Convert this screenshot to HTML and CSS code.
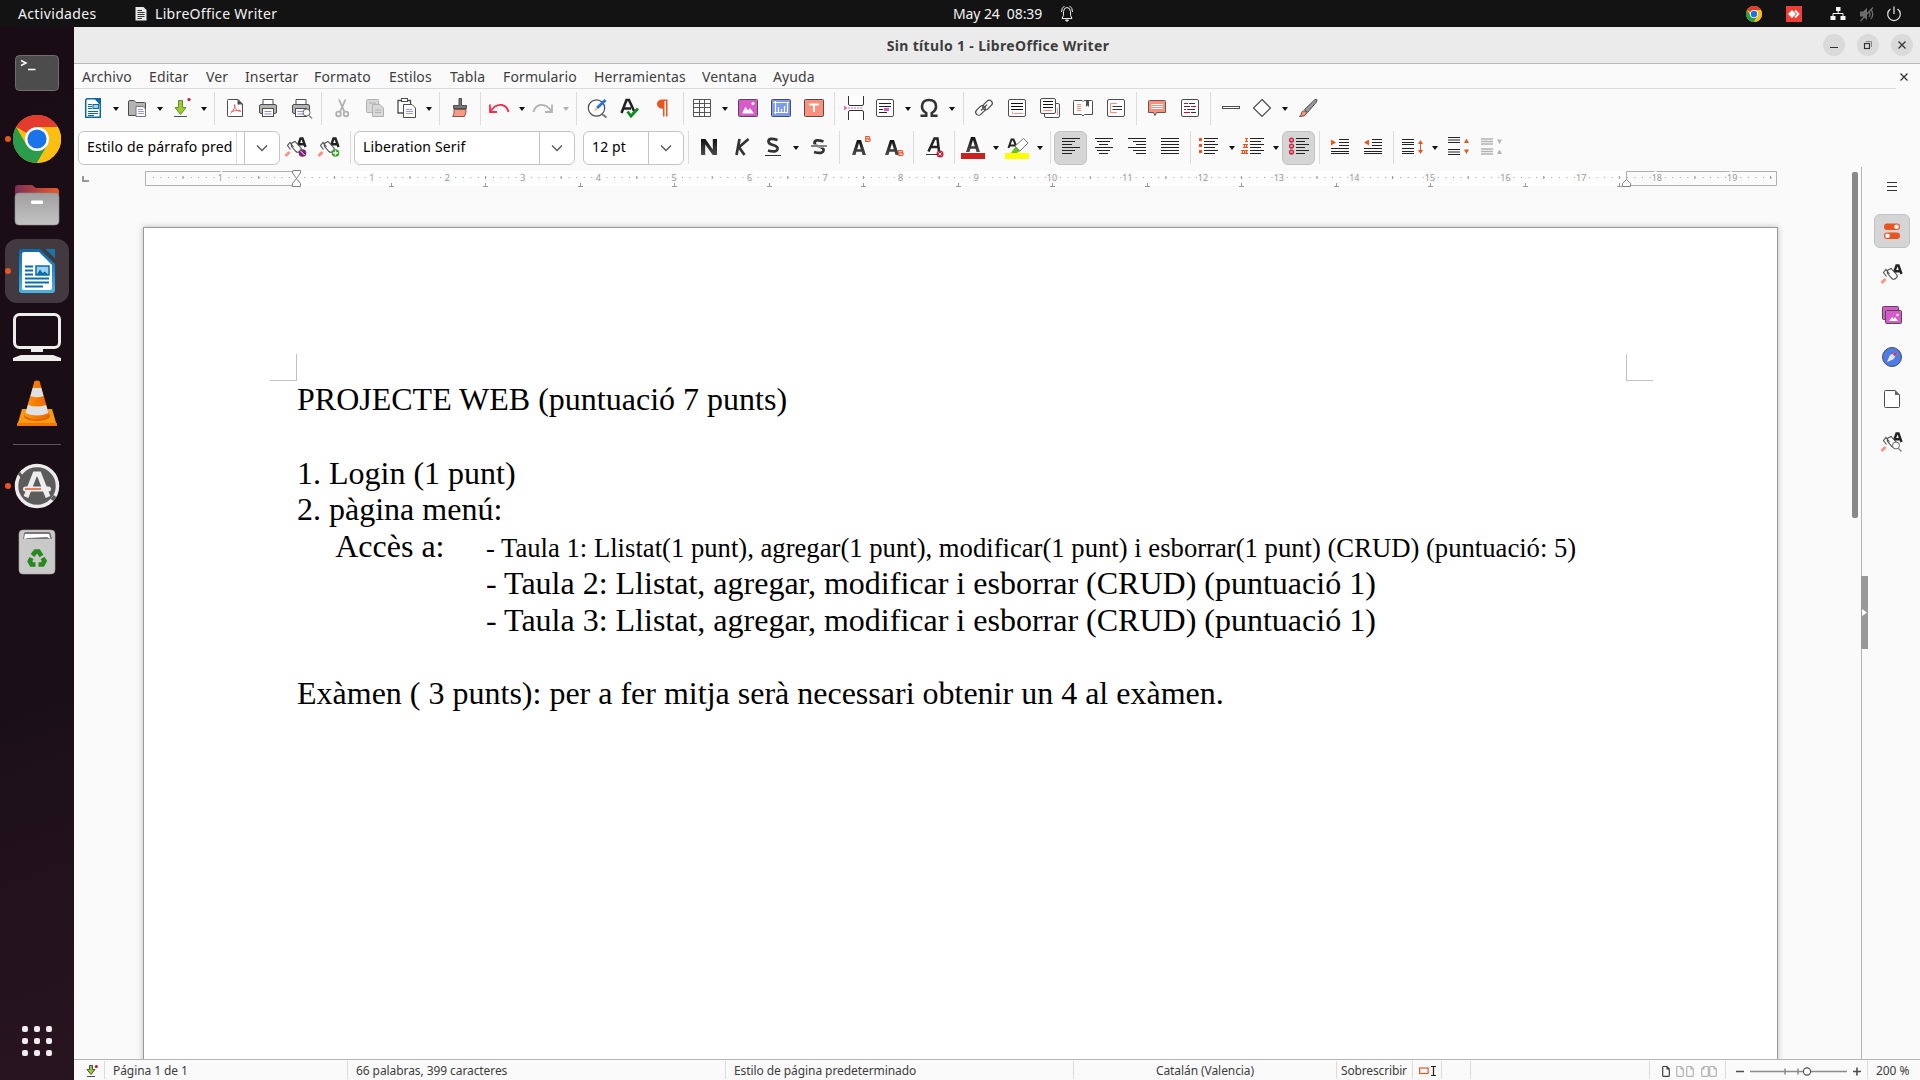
FILE: index.html
```html
<!DOCTYPE html>
<html lang="es">
<head>
<meta charset="utf-8">
<title>Sin título 1 - LibreOffice Writer</title>
<link rel="stylesheet" href="styles.css">
</head>
<body>
<svg class="defs" width="0" height="0" aria-hidden="true">
  <defs>
    <linearGradient id="gFolder" x1="0" x2="1" y1="0" y2="0"><stop offset="0" stop-color="#7c2d58"/><stop offset="1" stop-color="#ee5a24"/></linearGradient>
    <linearGradient id="gGrey" x1="0" x2="0" y1="0" y2="1"><stop offset="0" stop-color="#a09f9f"/><stop offset="1" stop-color="#c4c3c3"/></linearGradient>
    <linearGradient id="gBlue" x1="0" x2="0" y1="0" y2="1"><stop offset="0" stop-color="#0d69a3"/><stop offset=".5" stop-color="#1f8dcb"/><stop offset="1" stop-color="#4fb3e0"/></linearGradient>
    <linearGradient id="gCone" x1="0" x2="1" y1="0" y2="0"><stop offset="0" stop-color="#ff9a1a"/><stop offset=".5" stop-color="#f57900"/><stop offset="1" stop-color="#e86a00"/></linearGradient>
    <linearGradient id="gDark" x1="0" x2="0" y1="0" y2="1"><stop offset="0" stop-color="#111"/><stop offset="1" stop-color="#4d4d4d"/></linearGradient>
    <pattern id="dots" x="222.5" width="7.559" height="10" patternUnits="userSpaceOnUse"><rect y="0" width="1" height="1" fill="#999"/></pattern>

    <symbol id="chrome" viewBox="0 0 48 48">
      <circle cx="24" cy="24" r="24" fill="#fbbf12"/>
      <path d="M24 24 3.2 12A24 24 0 0 1 44.8 12H24z" fill="#e33b2e"/>
      <path d="M3.2 12A24 24 0 0 0 24 48L34.4 30 24 24 13.6 30z" fill="#2a9c4a"/>
      <path d="M24 12H44.8A24 24 0 0 1 24 48L34.4 30z" fill="#fbbf12"/>
      <circle cx="24" cy="24" r="12" fill="#fff"/><circle cx="24" cy="24" r="9.6" fill="#1a73e8"/>
    </symbol>
    <symbol id="new" viewBox="0 0 24 24"><path d="M6 2.7H14.5L19.3 8V21.3H4.7V4z" fill="#fff" stroke="#0a69a3" stroke-width="1.5"/><path d="M13 2H20V10z" fill="#0a69a3"/><path d="M7 8.5h4M7 10.5h4M7 12.5h4M7 15.5h10M7 17.5h10M7 19.5h6" stroke="#0a69a3"/><rect x="12" y="8.5" width="5.5" height="4" fill="#9fd0ee" stroke="#0a69a3"/></symbol>
    <symbol id="open" viewBox="0 0 24 24"><path d="M3.5 19.5V6Q3.500 4.500 5 4.500H9L11 6.500H19.500Q20.500 6.500 20.500 8V19.500z" fill="#b3b3b3" stroke="#4d4d4d"/><path d="M11 10.500H18L20.500 13V20.500H11z" fill="#fff" stroke="#777"/><path d="M13 13.500h5M13 15.500h6M13 17.500h6" stroke="#9a96f0"/></symbol>
    <symbol id="save" viewBox="0 0 24 24"><path d="M9.500 4.500h4v7h3.500L11.500 18.500 6 11.500h3.500z" fill="#99cc33" stroke="#6c8a2a"/><path d="M5 20.500h13" stroke="#4d4d4d"/><circle cx="20" cy="3.500" r="1.600" fill="#c8102e"/></symbol>
    <symbol id="pdf" viewBox="0 0 24 24"><path d="M5.500 3.500H15L19.500 8V20.500H5.500Q4.500 20.500 4.500 19.500V4.500Q4.500 3.500 5.500 3.500z" fill="#fff" stroke="#4d4d4d"/><path d="M14.500 3V8.500H20z" fill="#4d4d4d"/><path d="M11.500 8.500C12 13 14 15 18 15.500M11.500 8.500C12.500 11 10 15 7.500 17.500M8 16Q12 13.500 17.500 14.500" fill="none" stroke="#ed5e68"/></symbol>
    <symbol id="print" viewBox="0 0 24 24"><path d="M7 8.500V3.500H17V8.500" fill="#fff" stroke="#4d4d4d"/><rect x="3.500" y="8.500" width="17" height="9" rx="1.500" fill="#b3b3b3" stroke="#4d4d4d"/><rect x="6.500" y="12.500" width="11" height="8" fill="#fff" stroke="#4d4d4d"/><path d="M8.500 15.500h7M8.500 18h7" stroke="#8e8bea"/></symbol>
    <symbol id="mag" viewBox="0 0 24 24"><circle cx="17.500" cy="16.500" r="3.500" fill="#fafafa" stroke="#666"/><path d="M20 19.500 23 22.500" stroke="#888" stroke-width="1.500"/></symbol>
    <symbol id="cut" viewBox="0 0 24 24"><g fill="none" stroke="#b0b0b0" stroke-width="1.800"><path d="M9 3.500 14.500 16M15.500 3.500 10 16"/><circle cx="8.500" cy="18" r="2.300"/><circle cx="16" cy="18" r="2.300"/></g></symbol>
    <symbol id="copy" viewBox="0 0 24 24"><g fill="#d8d8d8" stroke="#b0b0b0"><rect x="3.500" y="3.500" width="12" height="13" rx="1"/><path d="M9.500 8.500H17L20.500 12V20.500H9.500z"/></g><path d="M6 7h7M12 14h6M12 16.500h6" stroke="#b0b0b0"/></symbol>
    <symbol id="paste" viewBox="0 0 24 24"><path d="M4 4.500H16.500V17H4z" fill="#fff" stroke="#4d4d4d" stroke-width="1.300"/><rect x="7.500" y="2.500" width="6" height="3" fill="#fff" stroke="#4d4d4d"/><path d="M9.500 8.500H18L21.500 12V21.500H9.500z" fill="#fff" stroke="#4d4d4d"/><path d="M12 13.500h6M12 15.500h7M12 17.500h7" stroke="#9a96f0"/></symbol>
    <symbol id="clone" viewBox="0 0 24 24"><path d="M11 2.500h2.500v7h5v3h-13v-3H11z" fill="#777" stroke="#4d4d4d"/><path d="M6 13.500H18V16L16.500 20.500H4.500C6.500 18.500 6 15 6 13.500z" fill="#ff9782" stroke="#7d5a52"/></symbol>
    <symbol id="undo" viewBox="0 0 24 24"><path d="M3.500 15.500Q8 8 15 9Q20 10 21.500 16M3 8.500V16H10" fill="none" stroke="currentColor" stroke-width="1.800"/></symbol>
    <symbol id="find" viewBox="0 0 24 24"><circle cx="11.500" cy="12" r="8.200" fill="#fff" stroke="#4d4d4d" stroke-width="1.200"/><path d="M17 18 21.500 21.500" stroke="#777" stroke-width="2"/><path d="M12 12 20.500 4" stroke="#2a6fe0" stroke-width="3"/><path d="M9.500 15 10.300 11.700 12.700 13.700z" fill="#e8b84a"/></symbol>
    <symbol id="spell" viewBox="0 0 24 24"><path d="M3.500 17 8.500 4H11L16 15M6 12.500H13" fill="none" stroke="#222" stroke-width="2.600"/><path d="M9.500 15.500 13 20 20 12.500" fill="none" stroke="#0c8a1e" stroke-width="2.800"/></symbol>
    <symbol id="pilcrow" viewBox="0 0 24 24"><path d="M14 3.500H11A5 4.600 0 0 0 11 12.700H12V20.500H13.500V5H15V20.500H16.500V3.500z" fill="#e95420"/></symbol>
    <symbol id="table" viewBox="0 0 24 24"><path d="M3.500 3.500H20.500V20.500H3.500zM3.500 7.500H20.500M3.500 11.500H20.500M3.500 16.500H20.500M9.500 3.500V20.500M14.500 3.500V20.500" fill="#fff" stroke="#555"/></symbol>
    <symbol id="image" viewBox="0 0 24 24"><rect x="2.500" y="3.500" width="19" height="17" rx="1" fill="#d85acb" stroke="#4d4d4d"/><path d="M6 17.500 9.500 10.500 12 14.500 14 12 18 17.500z" fill="#fff"/><circle cx="17" cy="7.500" r="1.500" fill="#fff"/></symbol>
    <symbol id="chart" viewBox="0 0 24 24"><rect x="2.500" y="3.500" width="19" height="17" rx="1" fill="#7b9bf5" stroke="#4d4d4d"/><path d="M4 6.500H20M6.500 5V18M5 16.500H19M18.500 6V17M9.500 16V11M12.500 16V13M15.500 16V10" fill="none" stroke="#fff" stroke-width="1.200"/></symbol>
    <symbol id="textbox" viewBox="0 0 24 24"><rect x="2.500" y="3.500" width="19" height="17" rx="1" fill="#ff8f7d" stroke="#4d4d4d"/><path d="M7 8.500H17M12 8.500V16" stroke="#fff" stroke-width="2"/></symbol>
    <symbol id="pbreak" viewBox="0 0 24 24"><path d="M6.500 0V8Q6.500 9.500 8 9.500H20Q21.500 9.500 21.500 8V0M6.500 24V16Q6.500 14.500 8 14.500H20Q21.500 14.500 21.500 16V24" fill="#fff" stroke="#333"/><path d="M6 12H21" stroke="#e06ad0" stroke-dasharray="2 1"/><path d="M2 9.500 5.500 12 2 14.500z" fill="#e06ad0"/></symbol>
    <symbol id="field" viewBox="0 0 24 24"><rect x="3.500" y="3.500" width="17" height="17" rx="1.500" fill="#fff" stroke="#4d4d4d"/><path d="M6 7.500H18M6 10.500H18M6 13.500H10M6 16.500H14" stroke="#222"/><rect x="11" y="12" width="5" height="3" fill="#d85acb"/></symbol>
    <symbol id="omega" viewBox="0 0 24 24"><path d="M3.500 19.700H9.200V17Q5 14.500 5 10.500Q5 4 12 4Q19 4 19 10.500Q19 14.500 14.800 17V19.700H20.500" fill="none" stroke="#333" stroke-width="2.600"/></symbol>
    <symbol id="link" viewBox="0 0 24 24"><g fill="none" stroke="#4d4d4d" stroke-width="1.200"><rect x="3" y="11.500" width="11" height="6" rx="3" transform="rotate(-45 8.500 14.500)"/><rect x="10" y="6" width="11" height="6" rx="3" transform="rotate(-45 15.500 9)"/><path d="M9 14.500 15 8.800"/></g></symbol>
    <symbol id="foot" viewBox="0 0 24 24"><rect x="3.500" y="3.500" width="17" height="17" rx="1.500" fill="#fff" stroke="#4d4d4d"/><path d="M6 7.500H18M6 10.500H18M6 13.500H18" stroke="#111"/><path d="M7.500 15.500V18.500M9 17.500H18" stroke="#ff8f7d"/></symbol>
    <symbol id="end" viewBox="0 0 24 24"><rect x="6.500" y="7.500" width="15" height="14" rx="1.500" fill="#fff" stroke="#4d4d4d"/><rect x="2.500" y="2.500" width="15" height="15" rx="1.500" fill="#fff" stroke="#4d4d4d"/><path d="M5 5.500H15M5 8.500H15M5 11.500H15" stroke="#111"/><path d="M5 14.500H14M19.500 12V19" stroke="#ff8f7d"/></symbol>
    <symbol id="book" viewBox="0 0 24 24"><path d="M3.500 4.500H11L12 5.500 13 4.500H20.500Q21.500 4.500 21.500 5.500V18.500H13.500L12 20 10.500 18.500H2.500V5.500Q2.500 4.500 3.500 4.500z" fill="#fff" stroke="#4d4d4d"/><path d="M6 8.500H10M6 10.500H10M6 12.500H10M6 14.500H10" stroke="#ff8f7d"/><path d="M15 4H18V11L16.500 9.500 15 11z" fill="#4d4d4d"/></symbol>
    <symbol id="xref" viewBox="0 0 24 24"><rect x="3.500" y="3.500" width="17" height="17" rx="1.500" fill="#fff" stroke="#4d4d4d"/><path d="M13 7.500H6.500V16.500H13" fill="none" stroke="#ff8f7d"/><path d="M8.500 10.500H18M8.500 13.500H18" stroke="#333"/></symbol>
    <symbol id="comment" viewBox="0 0 24 24"><path d="M4.500 4.500H19.500Q20.500 4.500 20.500 5.500V16.500H11.500L10 19.500 8.500 16.500H3.500V5.500Q3.500 4.500 4.500 4.500z" fill="#ff8f7d" stroke="#6b5450"/><path d="M6 8.500H18M6 10.500H18M6 12.500H18" stroke="#fff"/></symbol>
    <symbol id="track" viewBox="0 0 24 24"><rect x="3.500" y="3.500" width="17" height="17" rx="1.500" fill="#fff" stroke="#4d4d4d"/><path d="M6 7.500H10M13 10.500H18M6 13.500H8M6 16.500H12" stroke="#c8102e"/><path d="M11 7.500H17M6 10.500H12M9 13.500H17M13 16.500H18" stroke="#333"/></symbol>
    <symbol id="line" viewBox="0 0 24 24"><rect x="3.500" y="10.500" width="17" height="2" fill="#fff" stroke="#4d4d4d"/></symbol>
    <symbol id="shape" viewBox="0 0 24 24"><path d="M12 3.500 20.500 12 12 20.500 3.500 12z" fill="#fff" stroke="#4d4d4d" stroke-width="1.200"/></symbol>
    <symbol id="brush" viewBox="0 0 24 24"><path d="M8.500 13.500 19 3.500Q22 2.500 20.500 6L11.500 16.500z" fill="#999" stroke="#4d4d4d"/><path d="M3.500 20.500Q5.500 19 5.500 16.500Q7 14 9.500 15Q11.500 17 9.500 19Q7.500 20.500 3.500 20.500z" fill="#ff8f7d" stroke="#6b5450"/></symbol>

    <symbol id="style" viewBox="0 0 24 24"><path d="M13.500 12 16.500 3.500H18.500L21.500 12M15 9.300H21" fill="none" stroke="#222" stroke-width="2.400"/><path d="M6.500 14.500 3.500 10.500 6 7.500 9.500 12M8 8 11 6.500 17 13Q18 15 15.500 16.500Q13.500 18 12 16.500L7.500 11.500Q6.500 9.500 8 8z" fill="#fff" stroke="#4d4d4d" stroke-width="1.100"/><path d="M1.500 21 5.500 17" stroke="#ff8f7d" stroke-width="2.800"/></symbol>
    <symbol id="N" viewBox="0 0 24 24"><path d="M4 20V4H8.500L15.800 14.500V4H20V20H15.700L8.200 9.500V20z" fill="url(#gDark)"/></symbol>
    <symbol id="K" viewBox="0 0 24 24"><path d="M6.500 20 9.500 4M18.500 4 9 12.300 14.500 20" fill="none" stroke="#333" stroke-width="2.700"/></symbol>
    <symbol id="S" viewBox="0 0 24 24"><path d="M16.500 5Q7.500 2 7.500 6.500Q7.500 8.800 12 10Q17 11.500 16.500 14Q15.500 18 7 15.500" fill="none" stroke="#333" stroke-width="2.800"/></symbol>
    <symbol id="A" viewBox="0 0 24 24"><path d="M5 19 10 4H14L19 19H15.500L14.600 15.800H9.400L8.500 19zM10.200 13.200H13.800L12 7z" fill="url(#gDark)" fill-rule="evenodd"/></symbol>
    <symbol id="B" viewBox="0 0 6 6"><path d="M.7 .6H3.600Q5 .8 4.600 2Q4.400 2.800 3.600 2.900Q5.300 3 5.200 4.200Q5.100 5.400 3.700 5.400H.7zM.7 2.900H3.800" fill="none" stroke="#e95420" stroke-width="1.100"/></symbol>
    <symbol id="xmark" viewBox="0 0 8 8"><circle cx="4" cy="4" r="3.500" fill="#c8203a"/><path d="M2.500 2.500 5.500 5.500M5.500 2.500 2.500 5.500" stroke="#fff"/></symbol>
    <symbol id="indent" viewBox="0 0 24 24"><path d="M11 4.500H21M11 7.500H21M11 10.500H21M3 13.500H21M3 16.500H21M3 18.500H21" stroke="#222" stroke-width="1.200"/></symbol>
    <symbol id="page" viewBox="0 0 8 12"><path d="M1 1.500H5L7.300 4V10.500Q7.300 11.300 6.500 11.300H1.500Q.7 11.300.7 10.500V1.500" fill="none" stroke="currentColor" stroke-width="1.200"/><path d="M4.500 1V4.500H7.500z" fill="currentColor"/></symbol>
  </defs>
</svg>

<header class="topbar">
  <span class="activities">Actividades</span>
  <span class="app"><svg width="12" height="15" viewBox="0 0 12 15"><path d="M1 1H8.500L11.500 4V14.500H.5V1z" fill="#e8e8e8"/><path d="M2.500 4.500H7M2.500 6.500H9.500M2.500 8.500H9.500M2.500 10.500H9.500M2.500 12.500H7" stroke="#333"/></svg><span>LibreOffice Writer</span></span>
  <span class="clock"><span>May 24&nbsp; 08:39</span><svg width="14" height="17" viewBox="0 0 14 17" fill="none" stroke="#eee"><path d="M2 13.500Q4 11 3.500 6.500Q4 2.500 7 2.500Q10 2.500 10.500 6.500Q10 11 12 13.500zM1.500 7Q1.500 2.500 4.500 1M12.500 7Q12.500 2.500 9.500 1"/><path d="M5.500 15H8.500L7 16.500z" fill="#eee"/></svg></span>
  <span class="tray">
    <svg width="16" height="16"><use href="#chrome"/></svg>
    <svg width="16" height="16" viewBox="0 0 16 16"><path d="M0 0H16V16H0z" fill="#ef3e33"/><path d="M2 8 6 4 10 8 6 12z" fill="#fff"/><path d="M9 4.500 12.500 8 9 11.500" fill="none" stroke="#fff" stroke-width="1.800"/></svg>
    <svg width="16" height="16" viewBox="0 0 16 16"><path d="M6 1H10.500V5H6zM.5 10H5.500V14H.5zM10.500 10H15.500V14H10.500z" fill="#f5f5f5"/><path d="M8.200 5V7.500M3 10V7.500H13V10" fill="none" stroke="#f5f5f5"/></svg>
    <svg width="16" height="16" viewBox="0 0 16 16"><path d="M1 5.500H4L8 2V14L4 10.500H1z" fill="#6d6d6d"/><path d="M10 5.500Q12 8 10 11M12 3.500Q15.500 8 12 13M1.500 15 14 1.500" fill="none" stroke="#6d6d6d" stroke-width="1.300"/></svg>
    <svg width="16" height="16" viewBox="0 0 16 16"><path d="M4.500 3A6.300 6.300 0 1 0 11.500 3M8 .5V8" fill="none" stroke="#e8e8e8" stroke-width="1.200"/></svg>
  </span>
</header>

<div class="desktop">
  <nav class="dock">
    <div class="dock-item"><svg width="46" height="38" viewBox="0 0 46 38"><rect x="1.500" y="1.500" width="43" height="35" rx="4" fill="#4c4c4c" stroke="#6e6e6e"/><path d="M7 6.500 12 9 7 11.500M14 15.500H21.500" fill="none" stroke="#fff" stroke-width="1.500"/></svg></div>
    <div class="dock-item running"><svg width="48" height="48"><use href="#chrome"/></svg></div>
    <div class="dock-item"><svg width="46" height="42" viewBox="0 0 46 42"><path d="M1 20V4Q1 1 4 1H18L22 4H42Q45 4 45 8V20z" fill="url(#gFolder)"/><rect x="1" y="9" width="44" height="32" rx="4" fill="url(#gGrey)" stroke="#8d8d8d" stroke-width=".6"/><rect x="17" y="16.500" width="12" height="3.500" rx="1.200" fill="#fff"/></svg></div>
    <div class="dock-item running active"><svg width="38" height="46" viewBox="0 0 38 46"><path d="M4 1H22L37 16V42Q37 45 34 45H4Q1 45 1 42V4Q1 1 4 1z" fill="url(#gBlue)"/><path d="M6 4H21L34 17V40Q34 42 32 42H6Q4 42 4 40V6Q4 4 6 4z" fill="#fff"/><path d="M23 0 38 15" stroke="#433a40" stroke-width="2"/><path d="M27.500 1H37V10.500z" fill="#1b75ad"/><path d="M7 18.500H15M7 22.500H15M7 26.500H15M7 30.500H31M7 34.500H31M7 38.500H25" stroke="#0a6cab" stroke-width="2"/><rect x="18" y="18" width="13" height="9" fill="#9bd2f0" stroke="#0a6cab" stroke-width="1.500"/><path d="M18.500 27 22 21.500 24.500 25 27 23.500 30.500 27z" fill="#0a6cab"/></svg></div>
    <div class="dock-item"><svg width="48" height="48" viewBox="0 0 48 48"><rect x="1.500" y="1.500" width="45" height="33" rx="5" fill="none" stroke="#eeeeec" stroke-width="3"/><path d="M18 36H30V39H18zM8 42H40L48 45V48H0V45z" fill="#eeeeec"/></svg></div>
    <div class="dock-item"><svg width="42" height="46" viewBox="0 0 42 46"><path d="M6 29H36L41 46H1z" fill="#fb9a12"/><path d="M1 43H41V46H1z" fill="#f0780a"/><ellipse cx="21" cy="36" rx="13" ry="5" fill="#d96300"/><path d="M18.500 1Q21 0 23.500 1L33.500 36Q21 43 8.500 36z" fill="url(#gCone)"/><path d="M16.700 8H25.300L27.500 16Q21 18.500 14.500 16zM12 25Q21 28 30 25L32.500 33Q21 38 9.500 33z" fill="#dfe2e4"/></svg></div>
    <hr class="dock-sep">
    <div class="dock-item running"><svg width="46" height="46" viewBox="0 0 46 46"><circle cx="23" cy="23" r="20.500" fill="#5c5c5c" stroke="#ececec" stroke-width="3.500"/><path d="M5 10 8 14M38 37 41 33" stroke="#5c5c5c" stroke-width="3"/><path d="M12 34 21 11H25L34 34" fill="none" stroke="#eee" stroke-width="5"/><rect x="9" y="23.500" width="28" height="5" rx="2.500" fill="#eee"/><path d="M11 26H27" stroke="#e95420" stroke-width="1.500"/></svg></div>
    <div class="dock-item"><svg width="38" height="46" viewBox="0 0 38 46"><rect x="1" y="1" width="36" height="44" rx="4" fill="#c9c9c9" stroke="#aaa" stroke-width=".6"/><path d="M5 10 6 4Q6.500 3 8 3H30Q32 3 32.500 4L34 10z" fill="#777"/><path d="M6 10 7 5H31L32.500 10 29 8 10 9z" fill="#fff"/><g fill="none" stroke="#26891b" stroke-width="4.600"><path d="M14.500 26.500 17.500 22.500H20.500L23.500 27"/><path d="M24.500 29 26.500 32 24.500 35.500H20.500"/><path d="M17.500 35.500H13.500L11.800 32.500 13.500 29"/></g></svg></div>
    <div class="apps"><i></i><i></i><i></i><i></i><i></i><i></i><i></i><i></i><i></i></div>
  </nav>

  <main class="window">
    <div class="titlebar"><span></span><h1>Sin título 1 - LibreOffice Writer</h1>
      <div class="winbtns">
        <svg width="22" height="22" viewBox="0 0 22 22"><circle cx="11" cy="11" r="11" fill="#dadada"/><path d="M7 13.500H15" stroke="#333"/></svg>
        <svg width="22" height="22" viewBox="0 0 22 22"><circle cx="11" cy="11" r="11" fill="#dadada"/><rect x="7.500" y="9.500" width="5" height="5" fill="none" stroke="#333" stroke-width="1.200"/><path d="M9 7.500H14.500V13" fill="none" stroke="#888"/></svg>
        <svg width="22" height="22" viewBox="0 0 22 22"><circle cx="11" cy="11" r="11" fill="#dadada"/><path d="M7.500 7.500 14.500 14.500M14.500 7.500 7.500 14.500" stroke="#333" stroke-width="1.300"/></svg>
      </div>
    </div>
    <div class="menurow">
      <div class="menubar"><span>Archivo</span><span>Editar</span><span>Ver</span><span>Insertar</span><span>Formato</span><span>Estilos</span><span>Tabla</span><span>Formulario</span><span>Herramientas</span><span>Ventana</span><span>Ayuda</span></div>
      <svg width="10" height="10" viewBox="0 0 10 10"><path d="M1.500 1.500 8.500 8.500M8.500 1.500 1.500 8.500" stroke="#333" stroke-width="1.300"/></svg>
    </div>

    <div class="toolbar standard">
      <div class="grp first"><b class="ic sp"><svg><use href="#new"/></svg></b><b class="ar"></b><b class="ic sp"><svg><use href="#open"/></svg></b><b class="ar"></b><b class="ic sp"><svg><use href="#save"/></svg></b><b class="ar"></b></div>
      <div class="grp"><b class="ic"><svg><use href="#pdf"/></svg></b><b class="ic"><svg><use href="#print"/></svg></b><b class="ic"><svg><use href="#print"/><use href="#mag"/></svg></b></div>
      <div class="grp"><b class="ic"><svg><use href="#cut"/></svg></b><b class="ic"><svg><use href="#copy"/></svg></b><b class="ic sp"><svg><use href="#paste"/></svg></b><b class="ar"></b></div>
      <div class="grp"><b class="ic"><svg><use href="#clone"/></svg></b></div>
      <div class="grp"><b class="ic sp red"><svg><use href="#undo"/></svg></b><b class="ar"></b><b class="ic sp dim flip"><svg><use href="#undo"/></svg></b><b class="ar off"></b></div>
      <div class="grp"><b class="ic"><svg><use href="#find"/></svg></b><b class="ic"><svg><use href="#spell"/></svg></b><b class="ic"><svg><use href="#pilcrow"/></svg></b></div>
      <div class="grp"><b class="ic sp"><svg><use href="#table"/></svg></b><b class="ar"></b><b class="ic"><svg><use href="#image"/></svg></b><b class="ic"><svg><use href="#chart"/></svg></b><b class="ic"><svg><use href="#textbox"/></svg></b></div>
      <div class="grp insert"><b class="ic"><svg><use href="#pbreak"/></svg></b><b class="ic sp"><svg><use href="#field"/></svg></b><b class="ar"></b><b class="ic sp"><svg><use href="#omega"/></svg></b><b class="ar"></b></div>
      <div class="grp"><b class="ic"><svg><use href="#link"/></svg></b><b class="ic"><svg><use href="#foot"/></svg></b><b class="ic"><svg><use href="#end"/></svg></b><b class="ic"><svg><use href="#book"/></svg></b><b class="ic"><svg><use href="#xref"/></svg></b></div>
      <div class="grp"><b class="ic"><svg><use href="#comment"/></svg></b><b class="ic"><svg><use href="#track"/></svg></b></div>
      <div class="grp"><b class="ic"><svg><use href="#line"/></svg></b><b class="ic sp"><svg><use href="#shape"/></svg></b><b class="ar"></b><b class="ic"><svg><use href="#brush"/></svg></b></div>
    </div>

    <div class="toolbar formatting">
      <div class="grp first">
        <div class="combo style-combo"><span>Estilo de párrafo pred</span><i></i><em><svg width="12" height="8" viewBox="0 0 12 8"><path d="M1 1.500 6 6.500 11 1.500" fill="none" stroke="#555" stroke-width="1.300"/></svg></em></div>
        <b class="ic"><svg viewBox="0 0 24 24"><use href="#style"/><circle cx="18.500" cy="18" r="3.800" fill="#7a2a78"/><path d="M16.500 16 20.500 20" stroke="#fff"/></svg></b>
        <b class="ic"><svg viewBox="0 0 24 24"><use href="#style"/><circle cx="18.500" cy="18" r="3.800" fill="#37a02a"/><path d="M16 18H21M18.500 15.500V20.500" stroke="#fff" stroke-width="1.300"/></svg></b>
      </div>
      <div class="grp">
        <div class="combo font-combo"><span>Liberation Serif</span><em><svg width="12" height="8" viewBox="0 0 12 8"><path d="M1 1.500 6 6.500 11 1.500" fill="none" stroke="#555" stroke-width="1.300"/></svg></em></div>
        <div class="combo size-combo"><span>12 pt</span><em><svg width="12" height="8" viewBox="0 0 12 8"><path d="M1 1.500 6 6.500 11 1.500" fill="none" stroke="#555" stroke-width="1.300"/></svg></em></div>
      </div>
      <div class="grp"><b class="ic"><svg><use href="#N"/></svg></b><b class="ic"><svg><use href="#K"/></svg></b><b class="ic sp"><svg viewBox="0 0 24 24"><use href="#S"/><path d="M4 20.500H20" stroke="#333"/></svg></b><b class="ar"></b><b class="ic"><svg viewBox="0 0 24 24"><use href="#S" y="1.500"/><path d="M4 11H20" stroke="#fafafa" stroke-width="3"/><path d="M4 11H20" stroke="#333" stroke-width="1.200"/></svg></b></div>
      <div class="grp"><b class="ic"><svg viewBox="0 0 24 24"><use href="#A" x="-1" y="1"/><use href="#B" x="17" y="1" width="6" height="6"/></svg></b><b class="ic"><svg viewBox="0 0 24 24"><use href="#A" x="-1" y="1"/><use href="#B" x="17" y="15" width="6" height="6"/></svg></b></div>
      <div class="grp"><b class="ic"><svg viewBox="0 0 24 24"><path d="M6.500 16.500 12.500 3.500H15.500L17 16.500M8.500 12H16" fill="none" stroke="#222" stroke-width="2.500"/><path d="M4 19.500H15" stroke="#333"/><use href="#xmark" x="14" y="15" width="8" height="8"/></svg></b></div>
      <div class="grp"><b class="ic sp"><svg viewBox="0 0 24 24"><use href="#A" y="-2"/><path d="M0 18H24V24H0z" fill="#c9211e"/></svg></b><b class="ar"></b><b class="ic sp"><svg viewBox="0 0 24 24"><path d="M3.500 13 6.500 4.500H8.500L12 13M5 10.500H11" fill="none" stroke="#222" stroke-width="2"/><path d="M10 11 18.500 3.500 23 8 15 16z" fill="#fff" stroke="#777"/><path d="M6 18 10.500 11.500 15 16 12 18z" fill="#6abf1f"/><path d="M0 18H24V24H0z" fill="#ff0"/></svg></b><b class="ar"></b></div>
      <div class="grp align"><b class="ic on"><svg viewBox="0 0 24 24"><path d="M3 3.500H21M3 6.500H16M3 9.500H13M3 12.500H21M3 15.500H16M3 18.500H13" stroke="#222"/></svg></b><b class="ic"><svg viewBox="0 0 24 24"><path d="M3 3.500H21M5 6.500H18M7 9.500H16M3 12.500H21M5 15.500H18M7 18.500H16" stroke="#222"/></svg></b><b class="ic"><svg viewBox="0 0 24 24"><path d="M3 3.500H21M8 6.500H21M11 9.500H21M3 12.500H21M8 15.500H21M11 18.500H21" stroke="#222"/></svg></b><b class="ic"><svg viewBox="0 0 24 24"><path d="M3 3.500H21M3 6.500H21M3 9.500H21M3 12.500H21M3 15.500H21M3 18.500H21" stroke="#222"/></svg></b></div>
      <div class="grp lists"><b class="ic sp"><svg viewBox="0 0 24 24"><path d="M7 3.500H21M7 6.500H18M7 9.500H21M7 12.500H18M7 15.500H21M7 18.500H18" stroke="#222"/><path d="M2 3H5V6H2zM2 9H5V12H2zM2 15H5V18H2z" fill="#e95420"/></svg></b><b class="ar"></b><b class="ic sp"><svg viewBox="0 0 24 24"><path d="M9 3.500H23M9 6.500H20M9 9.500H23M9 12.500H20M9 15.500H23M9 18.500H20" stroke="#222"/><path d="M4 3.500H7M5.500 3.500V6.500M4 6.500H7M2 9.500H7M3.500 9.500V12.500M5.500 9.500V12.500M2 12.500H7M0 15.500H7M1.500 15.500V18.500M3.500 15.500V18.500M5.500 15.500V18.500M0 18.500H7" stroke="#e95420" stroke-width="1.200"/></svg></b><b class="ar"></b><b class="ic on"><svg viewBox="0 0 24 24"><path d="M9 3.500H22M9 6.500H18M9 9.500H22M9 12.500H18M9 15.500H22M9 18.500H18" stroke="#222"/><use href="#xmark" x="1.500" y="2" width="6" height="6"/><use href="#xmark" x="1.500" y="8" width="6" height="6"/><use href="#xmark" x="1.500" y="14" width="6" height="6"/></svg></b></div>
      <div class="grp"><b class="ic"><svg viewBox="0 0 24 24"><use href="#indent"/><path d="M3 4.500 8 7.500 3 10.500z" fill="#e95420"/></svg></b><b class="ic"><svg viewBox="0 0 24 24"><use href="#indent"/><path d="M8 4.500 3 7.500 8 10.500z" fill="#e95420"/></svg></b></div>
      <div class="grp last"><b class="ic sp"><svg viewBox="0 0 24 24"><path d="M2 4.500H14M2 7.500H14M2 9.500H14M2 13.500H14M2 16.500H14M2 18.500H14" stroke="#222" stroke-width="1.200"/><path d="M20.500 7V17" stroke="#e95420"/><path d="M18 9 20.500 5 23 9zM18 15 20.500 19 23 15z" fill="#e95420"/></svg></b><b class="ar"></b><b class="ic"><svg viewBox="0 0 24 24"><path d="M2 2.500H14M2 5H14M2 7.500H14M2 14.500H14M2 17H14M2 19.500H14" stroke="#222" stroke-width="1.200"/><path d="M18 8 20.500 3.500 23 8zM18 14.500 20.500 19 23 14.500z" fill="#e95420"/></svg></b><b class="ic"><svg viewBox="0 0 24 24"><path d="M2 4H14M2 6.500H14M2 9H14M2 14H14M2 16.500H14M2 19H14" stroke="#b3b3b3" stroke-width="1.600"/><path d="M18 4.500 20.500 9 23 4.500zM18 19 20.500 14.500 23 19z" fill="#b3b3b3"/></svg></b></div>
    </div>

    <div class="work">
      <section class="editor">
        <svg class="ruler" width="1770" height="24" viewBox="0 0 1770 24">
          <path d="M9 9V14H15" fill="none" stroke="#999" stroke-width="2"/>
          <rect x="222" y="4" width="1331" height="15" fill="#fff"/>
          <rect x="76" y="10" width="1624" height="1" fill="url(#dots)"/>
          <g fill="none" stroke="#999">
            <path d="M71.500 4.500H222.500V18.500H71.500zM1552.500 4.500H1702.500V18.500H1552.500z" stroke="#b0b0b0"/>
            <path d="M109 9V12M184.700 9V12M260.300 9V12M335.900 9V12M411.500 9V12M487.100 9V12M562.700 9V12M638.200 9V12M713.800 9V12M789.400 9V12M865 9V12M940.600 9V12M1016.200 9V12M1091.800 9V12M1167.300 9V12M1242.900 9V12M1318.500 9V12M1394.100 9V12M1469.700 9V12M1545.300 9V12M1620.900 9V12M1696.500 9V12"/>
            <path d="M317.500 16V19.500M315 19.500H320M411.500 16V19.500M409 19.500H414M506.500 16V19.500M504 19.500H509M600.500 16V19.500M598 19.500H603M695.500 16V19.500M693 19.500H698M789.500 16V19.500M787 19.500H792M884.500 16V19.500M882 19.500H887M978.500 16V19.500M976 19.500H981M1073.500 16V19.500M1071 19.500H1076M1167.500 16V19.500M1165 19.500H1170M1262.500 16V19.500M1260 19.500H1265M1356.500 16V19.500M1354 19.500H1359M1451.500 16V19.500M1449 19.500H1454M1545.500 16V19.500M1543 19.500H1548"/>
            <path d="M218.500 4V6L222.500 11.500 226.500 6V3.500H218.500M218.500 19.500V16.500L222.500 11.500 226.500 16.500V19.500zM1548.500 19.500V16.500L1552.500 12.500 1556.500 16.500V19.500z" fill="#fff" stroke="#808080"/>
          </g>
          <g class="nums" text-anchor="middle"><text x="146.400" y="14">1</text><text x="297.900" y="14">1</text><text x="373.300" y="14">2</text><text x="448.800" y="14">3</text><text x="524.300" y="14">4</text><text x="600" y="14">5</text><text x="675.500" y="14">6</text><text x="751" y="14">7</text><text x="826.700" y="14">8</text><text x="902.200" y="14">9</text><text x="978" y="14">10</text><text x="1053.500" y="14">11</text><text x="1129" y="14">12</text><text x="1204.800" y="14">13</text><text x="1280.300" y="14">14</text><text x="1356" y="14">15</text><text x="1431.500" y="14">16</text><text x="1507.200" y="14">17</text><text x="1582.800" y="14">18</text><text x="1658.200" y="14">19</text></g>
        </svg>
        <article class="page">
          <div class="corners"><i></i><i></i></div>
<p>PROJECTE WEB (puntuació 7 punts)</p>
<p>&nbsp;</p>
<p>1. Login (1 punt)</p>
<p>2. pàgina menú:</p>
<p>     Accès a:&#9;<small>- Taula 1: Llistat(1 punt), agregar(1 punt), modificar(1 punt) i esborrar(1 punt) (CRUD) (puntuació: 5)</small></p>
<p>&#9;&#9;- Taula 2: Llistat, agregar, modificar i esborrar (CRUD) (puntuació 1)</p>
<p>&#9;&#9;- Taula 3: Llistat, agregar, modificar i esborrar (CRUD) (puntuació 1)</p>
<p>&nbsp;</p>
<p>Exàmen ( 3 punts): per a fer mitja serà necessari obtenir un 4 al exàmen.</p>
        </article>
      </section>
      <div class="scroll"><i></i></div>
      <div class="splitter"><svg width="7" height="73" viewBox="0 0 7 73"><path d="M0 0H7V73H0z" fill="#999"/><path d="M1 33 6 36.500 1 40z" fill="#fff"/></svg></div>
      <aside class="sidebar">
        <b class="side"><svg viewBox="0 0 24 24"><path d="M7 7.500H17M7 11.500H17M7 15.500H17" stroke="#333"/></svg></b>
        <b class="side on"><svg viewBox="0 0 24 24"><rect x="4" y="4.500" width="16" height="6.500" rx="3.200" fill="#e95420"/><rect x="4" y="13.500" width="16" height="6.500" rx="3.200" fill="#e95420"/><circle cx="16.500" cy="7.700" r="2.300" fill="#fff"/><circle cx="7.500" cy="16.700" r="2.300" fill="#fff"/></svg></b>
        <b class="side low"><svg><use href="#style"/></svg></b>
        <b class="side"><svg viewBox="0 0 24 24"><rect x="2.500" y="3.500" width="16" height="13" rx="1" fill="#d85acb" stroke="#4d4d4d"/><rect x="5.500" y="7.500" width="16" height="13" rx="1" fill="#d85acb" stroke="#4d4d4d"/><path d="M9 18 12 14 13.500 16 15 14 18 18z" fill="#fff"/><circle cx="17.500" cy="12" r="1.200" fill="#fff"/></svg></b>
        <b class="side"><svg viewBox="0 0 24 24"><circle cx="12" cy="12" r="9.500" fill="#4d7be8" stroke="#4d4d4d"/><path d="M7 17 10 10 14 14z" fill="#eee"/><path d="M10 10 17 7 14 14z" fill="#e8e0f0"/><path d="M12.500 9 17.500 6.500 15 11.500z" fill="#e0304a"/></svg></b>
        <b class="side"><svg viewBox="0 0 24 24"><path d="M5.500 3.500H15L19.500 8V19.500Q19.500 20.500 18.500 20.500H5.500Q4.500 20.500 4.500 19.500V4.500Q4.500 3.500 5.500 3.500z" fill="#fff" stroke="#4d4d4d"/><path d="M15 3V8H20z" fill="#666"/></svg></b>
        <b class="side low"><svg viewBox="0 0 24 24"><use href="#style"/><use href="#mag" x="-1.500" y="-1"/></svg></b>
      </aside>
    </div>

    <footer class="status">
      <span class="c-save"><svg width="12" height="14" viewBox="0 0 12 14"><path d="M3.500 1.500H6.500V5.500H9L5 10.500 1 5.500H3.500z" fill="#99cc33" stroke="#4d4d4d"/><path d="M1 12.500H9" stroke="#4d4d4d"/><circle cx="10.300" cy="2.500" r="1.500" fill="#c8102e"/></svg></span>
      <span>Página 1 de 1</span>
      <span>66 palabras, 399 caracteres</span>
      <span>Estilo de página predeterminado</span>
      <span class="mid">Catalán (Valencia)</span>
      <span class="c-mode">Sobrescribir</span>
      <span class="c-sel"><svg width="18" height="12" viewBox="0 0 18 12"><rect x=".6" y="3" width="8.500" height="5.500" fill="none" stroke="#e95420" stroke-width="1.200"/><path d="M12 1.500H17M14.500 1.500V10.500M12 10.500H17" stroke="#222" stroke-width="1.200" fill="none"/></svg></span>
      <span></span>
      <span></span>
      <span class="views"><svg width="8" height="12"><use href="#page"/></svg><svg class="dim" width="19" height="12"><use href="#page" width="8" height="12"/><use href="#page" x="10" width="8" height="12"/></svg><svg class="dim" width="17" height="12"><g transform="translate(8 0) scale(-1 1)"><use href="#page" width="8" height="12"/></g><use href="#page" x="8" width="8" height="12"/></svg></span>
      <span class="zoomer"><svg width="126" height="12" viewBox="0 0 126 12"><path d="M0 6.500H8M117 6.500H125M121 2.500V10.500" stroke="#4d4d4d" stroke-width="1.600"/><path d="M14 6.500H111" stroke="#8a8a8a" stroke-width="1.300"/><path d="M49 3.500V9.500M62 3.500V9.500" stroke="#8a8a8a" stroke-width="1.500"/><circle cx="71" cy="6.500" r="3.600" fill="#fff" stroke="#4d4d4d" stroke-width="1.100"/></svg></span>
      <span>200 %</span>
    </footer>
  </main>
</div>
</body>
</html>
```
FILE: styles.css
```css
* { box-sizing: border-box; }
body {
  margin: 0;
  width: 1920px;
  height: 1080px;
  overflow: hidden;
  display: flex;
  flex-direction: column;
  font-family: "Noto Sans", "Open Sans", sans-serif;
  font-size: 14px;
  color: #3d3d3d;
  background: #fafafa;
}
.defs { position: absolute; }
svg { display: block; flex: none; }
b, i, em { font-weight: normal; font-style: normal; }

/* top panel */
.topbar {
  height: 27px;
  flex: none;
  background: #131313;
  color: #f2f2f2;
  display: grid;
  grid-template-columns: 135px 818px 1fr auto;
  align-items: center;
}
.activities { padding-left: 18px; letter-spacing: .35px; }
.app, .clock, .tray { display: flex; align-items: center; }
.app { gap: 8px; letter-spacing: .33px; }
.clock { gap: 18px; letter-spacing: -.1px; }
.tray { padding-right: 18px; }
.tray svg:nth-child(2) { margin-left: 24px; }
.tray svg:nth-child(3) { margin-left: 28px; }
.tray svg:nth-child(4) { margin-left: 13px; }
.tray svg:nth-child(5) { margin-left: 11px; }

.desktop { flex: 1; display: flex; min-height: 0; }

/* dock */
.dock {
  width: 74px;
  padding-top: 13px;
  display: flex;
  flex-direction: column;
  align-items: center;
  background: linear-gradient(160deg, #1a0c15 0%, #1a0f16 60%, #28141f 100%);
}
.dock-item {
  width: 64px;
  height: 64px;
  margin: 1px 0;
  display: flex;
  align-items: center;
  justify-content: center;
  border-radius: 12px;
  position: relative;
}
.dock-item.active { background: #433a40; }
.dock-item.running::before {
  content: "";
  position: absolute;
  left: 0;
  top: 29px;
  width: 6px;
  height: 6px;
  border-radius: 50%;
  background: #e95420;
}
.dock-sep { width: 48px; height: 1px; border: 0; margin: 8px 0; background: #5e555b; }
.apps {
  margin-top: auto;
  margin-bottom: 24px;
  display: grid;
  grid-template-columns: repeat(3, 6px);
  gap: 6px;
}
.apps i { width: 6px; height: 6px; border-radius: 2px; background: #eee; }

/* window */
.window { flex: 1; display: flex; flex-direction: column; min-width: 0; }
.titlebar {
  height: 37px;
  border-bottom: 1px solid #b9b9b9;
  background: #ebebeb;
  display: grid;
  grid-template-columns: 1fr auto 1fr;
  align-items: center;
}
.titlebar h1 { margin: 0; padding-left: 2px; font-size: 14px; font-weight: bold; letter-spacing: .34px; }
.winbtns { display: flex; justify-content: flex-end; gap: 12px; padding-right: 7px; }
.menurow { height: 25px; display: flex; justify-content: space-between; align-items: center; padding-right: 11px; }
.menubar {
  width: 1822px;
  height: 25px;
  border-bottom: 1px solid #dcdcdc;
  display: grid;
  grid-template-columns: 67px 57px 39px 69px 75px 61px 53px 91px 108px 71px 60px;
  align-items: center;
  padding-left: 8px;
  letter-spacing: .12px;
}

.toolbar { height: 39px; display: grid; align-items: center; }
.standard { grid-template-columns: 140px 107px 118px 41px 96px 107px 151px 129px 173px 74px 1fr; }
.formatting { grid-template-columns: 276px 338px 151px 74px 41px 96px 140px 129px 74px 1fr; }
.grp { height: 33px; border-left: 1px solid #dcdcdc; padding-left: 3px; display: flex; align-items: center; }
.grp.first { border-left: 0; padding-left: 4px; }
.grp.insert { padding-left: 2px; }
.ic { width: 33px; height: 34px; display: flex; align-items: center; justify-content: center; flex: none; border-radius: 6px; }
.ic.sp { width: 30px; }
.ic svg, .side svg { width: 24px; height: 24px; }
.ic svg { margin-bottom: 2px; }
.ic.on, .side.on { background: #d5d5d5; border: 1px solid #c2c2c2; }
.red { color: #ef2f4b; }
.dim { color: #b3b3b3; }
.flip svg { transform: scaleX(-1); }
.ar { width: 14px; height: 4px; display: flex; justify-content: center; padding-left: 1px; }
.ar::before { content: ""; border: 3.500px solid transparent; border-top: 4px solid #111; border-bottom: 0; }
.ar.off::before { border-top-color: #b3b3b3; }

.combo {
  height: 34px;
  display: flex;
  border: 1px solid #c4c4c4;
  border-radius: 6px;
  background: #fff;
  color: #000;
  flex: none;
  letter-spacing: .15px;
}
.combo span { flex: 1; min-width: 0; white-space: nowrap; line-height: 30px; padding-left: 8px; }
.combo i { width: 8px; border-left: 1px solid #dcdcdc; }
.combo em { width: 35px; border-left: 1px solid #c4c4c4; display: flex; align-items: center; justify-content: center; }
.style-combo { width: 202px; margin-right: -1px; }
.font-combo { width: 221px; margin-right: 8px; }
.size-combo { width: 101px; }

/* document area */
.work { flex: 1; display: flex; min-height: 0; }
.editor { width: 1770px; overflow: hidden; }
.nums { font-size: 9px; fill: #999; stroke: #fafafa; stroke-width: 4px; paint-order: stroke; }
.page {
  width: 1635px;
  height: 1000px;
  margin: 36px 0 0 69px;
  padding: 126px 0 0 126px;
  background: #fff;
  border: 1px solid #999;
  box-shadow: 0 0 6px rgba(0, 0, 0, .25);
}
.page p {
  margin: 0 0 0 27px;
  height: 36.750px;
  line-height: 36.750px;
  font-family: "Liberation Serif", serif;
  font-size: 32px;
  color: #000;
  white-space: pre;
  tab-size: 94.488px;
}
.page small { font-size: 26.667px; }
.corners { width: 1383px; height: 27px; display: flex; justify-content: space-between; }
.corners i { width: 27px; border-bottom: 1px solid #c0c0c0; border-right: 1px solid #c0c0c0; }
.corners i + i { border-right: 0; border-left: 1px solid #c0c0c0; }
.scroll { width: 17px; padding: 5px 0 0 8px; }
.scroll i { display: block; width: 6px; height: 346px; border-radius: 2px; background: #888; }
.splitter { width: 7px; display: flex; align-items: center; border-left: 1px solid #b5b5b5; }
.splitter svg { margin-left: -1px; margin-bottom: 1px; }
.sidebar { flex: 1; padding: 3px 0 0 6px; display: flex; flex-direction: column; }
.side { width: 36px; height: 34px; margin-bottom: 8px; display: flex; align-items: center; justify-content: center; border-radius: 6px; }
.side:first-child { margin-bottom: 10px; }
.side.low { padding-top: 2px; }

/* status bar */
.status {
  height: 21px;
  border-top: 1px solid #b5b5b5;
  display: grid;
  grid-template-columns: 31px 243px 378px 348px 263px 76px 29px 29px 179px 76px 142px 1fr;
  align-items: center;
  font-size: 12px;
  white-space: nowrap;
  letter-spacing: -.08px;
}
.status span { height: 18px; line-height: 17px; border-right: 1px solid #dcdcdc; padding: 1px 0 0 8px; display: flex; align-items: center; }
.status span:last-child { border-right: 0; }
.status .c-save { padding-left: 12px; }
.status .mid { justify-content: center; padding-left: 0; }
.status .c-mode { padding-left: 4px; letter-spacing: -.15px; }
.status .c-sel { padding-left: 6px; }
.status .views { gap: 6px; padding-left: 12px; }
.status .zoomer { padding-left: 10px; }
```
